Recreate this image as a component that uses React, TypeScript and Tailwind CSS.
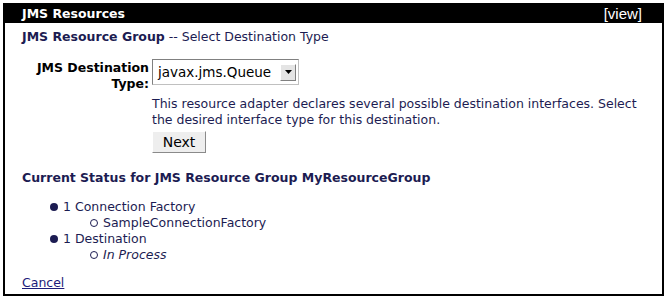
export default function App() {
  return (
    <div className="w-[667px] h-[299px] bg-white p-[3px] font-['DejaVu_Sans',sans-serif] text-[12.5px] text-[#1c1c52]">
      <div className="h-full border-2 border-black flex flex-col">
        {/* Header */}
        <div className="h-[18px] bg-black text-white flex items-center pl-[17px] pr-[20px] shrink-0">
          <span className="font-bold">JMS Resources</span>
          <div className="flex-1" />
          <span className="font-['Liberation_Sans',sans-serif] text-[15px]">[view]</span>
        </div>

        <div className="flex-1 pl-[17px] pt-[6px] leading-[16px]">
          <div>
            <span className="font-bold">JMS Resource Group</span> -- Select Destination Type
          </div>

          {/* Destination type row */}
          <div className="flex mt-[14px]">
            <div className="w-[130px] text-right font-bold text-black pr-[3px] pt-[1px]">
              JMS Destination
              <br />
              Type:
            </div>
            <div className="flex flex-col">
              <div className="flex items-center w-[147px] h-[26px] border border-[#c0c0c0] border-t-[#808080] border-l-[#808080] bg-white pl-[5px] pr-[2px]">
                <span className="flex-1 text-black text-[13.5px]">javax.jms.Queue</span>
                <span className="w-[16px] h-[17px] bg-[#e4e4e4] border border-[#808080] border-t-white border-l-white flex items-center justify-center">
                  <svg width="7" height="4" viewBox="0 0 7 4">
                    <path d="M0 0 H7 L3.5 4 Z" fill="#000" />
                  </svg>
                </span>
              </div>
              <p className="mt-[11px] w-[500px]">
                This resource adapter declares several possible destination interfaces. Select the desired interface type for this destination.
              </p>
              <button className="mt-[3px] w-[54px] h-[22px] bg-[#eeeeee] border border-[#8a8a8a] border-t-white border-l-white text-black text-[14px] flex items-center justify-center">
                Next
              </button>
            </div>
          </div>

          <div className="font-bold mt-[17px]">Current Status for JMS Resource Group MyResourceGroup</div>

          <ul className="mt-[13px] pl-[28px]">
            <li className="flex items-center gap-[5px]">
              <span className="w-[8px] h-[8px] rounded-full bg-[#1c1c52]" />
              1 Connection Factory
            </li>
            <li className="flex items-center gap-[5px] pl-[40px]">
              <span className="w-[8px] h-[8px] rounded-full border border-[#1c1c52]" />
              SampleConnectionFactory
            </li>
            <li className="flex items-center gap-[5px]">
              <span className="w-[8px] h-[8px] rounded-full bg-[#1c1c52]" />
              1 Destination
            </li>
            <li className="flex items-center gap-[5px] pl-[40px]">
              <span className="w-[8px] h-[8px] rounded-full border border-[#1c1c52]" />
              <i>In Process</i>
            </li>
          </ul>

          <a href="#" className="block mt-[12px] underline text-[#1c1c7a] w-fit">
            Cancel
          </a>
        </div>
      </div>
    </div>
  );
}
